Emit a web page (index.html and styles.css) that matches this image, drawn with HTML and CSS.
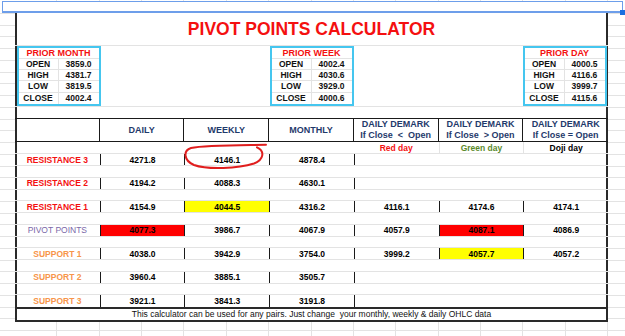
FILE: index.html
```html
<!DOCTYPE html>
<html>
<head>
<meta charset="utf-8">
<link rel="stylesheet" href="styles.css">
</head>
<body>
<div class="sheet">
  <div class="selbar"><span class="handle"></span></div>
  <div class="frame">
    <div class="title">PIVOT POINTS CALCULATOR</div>
    <div class="priors">
      <div class="prior">
        <div class="ph">PRIOR MONTH</div>
        <div class="k">OPEN</div><div class="v">3859.0</div>
        <div class="k">HIGH</div><div class="v">4381.7</div>
        <div class="k">LOW</div><div class="v">3819.5</div>
        <div class="k last">CLOSE</div><div class="v last">4002.4</div>
      </div>
      <div class="prior">
        <div class="ph">PRIOR WEEK</div>
        <div class="k">OPEN</div><div class="v">4002.4</div>
        <div class="k">HIGH</div><div class="v">4030.6</div>
        <div class="k">LOW</div><div class="v">3929.0</div>
        <div class="k last">CLOSE</div><div class="v last">4000.6</div>
      </div>
      <div class="prior">
        <div class="ph">PRIOR DAY</div>
        <div class="k">OPEN</div><div class="v">4000.5</div>
        <div class="k">HIGH</div><div class="v">4116.6</div>
        <div class="k">LOW</div><div class="v">3999.7</div>
        <div class="k last">CLOSE</div><div class="v last">4115.6</div>
      </div>
    </div>
    <div class="gap"></div>
    <div class="thead">
      <div></div>
      <div>DAILY</div>
      <div>WEEKLY</div>
      <div>MONTHLY</div>
      <div><span>DAILY DEMARK</span><span class="pre">If Close  &lt;  Open</span></div>
      <div><span>DAILY DEMARK</span><span class="pre">If Close  &gt; Open</span></div>
      <div><span>DAILY DEMARK</span><span>If Close = Open</span></div>
    </div>
    <div class="row sub">
      <div></div><div></div><div></div><div></div>
      <div class="red">Red day</div>
      <div class="green g">Green day</div>
      <div class="g">Doji day</div>
    </div>
    <div class="row">
      <div class="lbl res">RESISTANCE 3</div>
      <div class="b">4271.8</div><div class="b">4146.1</div><div class="b">4878.4</div>
      <div class="b"></div><div></div><div></div>
    </div>
    <div class="sp"></div>
    <div class="row">
      <div class="lbl res">RESISTANCE 2</div>
      <div class="b">4194.2</div><div class="b">4088.3</div><div class="b">4630.1</div>
      <div class="b"></div><div></div><div></div>
    </div>
    <div class="sp"></div>
    <div class="row">
      <div class="lbl res">RESISTANCE 1</div>
      <div class="b">4154.9</div><div class="b yel">4044.5</div><div class="b">4316.2</div>
      <div class="b">4116.1</div><div class="b">4174.6</div><div class="b">4174.1</div>
    </div>
    <div class="sp"></div>
    <div class="row">
      <div class="lbl pp">PIVOT POINTS</div>
      <div class="b redbg">4077.3</div><div class="b">3986.7</div><div class="b">4067.9</div>
      <div class="b">4057.9</div><div class="b redbg">4087.1</div><div class="b">4086.9</div>
    </div>
    <div class="sp"></div>
    <div class="row">
      <div class="lbl sup">SUPPORT 1</div>
      <div class="b">4038.0</div><div class="b">3942.9</div><div class="b">3754.0</div>
      <div class="b">3999.2</div><div class="b yel">4057.7</div><div class="b">4057.2</div>
    </div>
    <div class="sp"></div>
    <div class="row">
      <div class="lbl sup">SUPPORT 2</div>
      <div class="b">3960.4</div><div class="b">3885.1</div><div class="b">3505.7</div>
      <div class="b"></div><div></div><div></div>
    </div>
    <div class="sp"></div>
    <div class="row lastrow">
      <div class="lbl sup">SUPPORT 3</div>
      <div class="b">3921.1</div><div class="b">3841.3</div><div class="b">3191.8</div>
      <div class="b"></div><div></div><div></div>
    </div>
    <div class="footer">This calculator can be used for any pairs. Just change  your monthly, weekly &amp; daily OHLC data</div>
  </div>
  <svg class="circle" width="625" height="336" viewBox="0 0 625 336">
    <path d="M 266 143.8 C 245 144.2, 205 143.8, 191 147 C 183 149.5, 183.5 159.5, 194 164 C 208 169, 238 167.5, 254 162.5 C 264 158.5, 265 150, 257 146.3" fill="none" stroke="#e01e1e" stroke-width="2" stroke-linecap="round"/>
  </svg>
</div>
</body>
</html>
```
FILE: styles.css
```css
* { box-sizing: border-box; }
html, body { margin: 0; padding: 0; }
body {
  width: 625px;
  height: 336px;
  overflow: hidden;
  font-family: "Liberation Sans", Arial, sans-serif;
  color: #000;
  background-color: #fff;
  background-image:
    repeating-linear-gradient(to bottom, transparent 0 10.75px, #e3e3e3 10.75px 11.75px),
    repeating-linear-gradient(to right, transparent 0 41.36px, #e3e3e3 41.36px 42.36px);
  background-position: 0 2px, 15px 0;
}
.sheet { position: relative; height: 336px; }
.selbar {
  position: relative;
  margin: 1px 0 0 2px;
  width: 621px;
  height: 12px;
  border: 1px solid #6d9eea;
  border-bottom-width: 2px;
  background: #fff;
}
.handle {
  position: absolute;
  right: -3px;
  bottom: -4px;
  width: 5px;
  height: 5px;
  background: #1a6fe0;
}
.frame {
  margin-left: 15px;
  width: 593px;
  background: #fff;
  box-shadow: inset 2px 0 0 #2a2a2a, inset -2px 0 0 #2a2a2a;
  border-bottom: 2px solid #2a2a2a;
}
.title {
  height: 33px;
  border-bottom: 1px solid #e3e3e3;
  display: flex;
  align-items: center;
  justify-content: center;
  color: #f41010;
  font-weight: bold;
  font-size: 17.5px;
}
.priors {
  display: flex;
  justify-content: space-between;
  padding: 0 1.5px;
  height: 61px;
  border-bottom: 1px solid #e3e3e3;
}
.prior {
  width: 84px;
  height: 60px;
  border: 2px solid #45c6ef;
  background: #fff;
  display: grid;
  grid-template-columns: 1fr 1fr;
  grid-template-rows: 10.5px repeat(4, 1fr);
  font-size: 8.5px;
  font-weight: bold;
  color: #111;
}
.prior .ph {
  grid-column: 1 / 3;
  color: #f41010;
  font-size: 9px;
  line-height: 10px;
  text-align: center;
  border-bottom: 1px solid #e3e3e3;
}
.prior .k, .prior .v {
  display: flex;
  align-items: center;
  justify-content: center;
  border-bottom: 1px solid #e3e3e3;
}
.prior .k { border-right: 1px solid #e3e3e3; }
.prior .last { border-bottom: 0; }
.gap { height: 11px; }
.thead {
  display: grid;
  grid-template-columns: repeat(7, 1fr);
  height: 24px;
  border-top: 1px solid #1a1a1a;
  border-bottom: 1px solid #1a1a1a;
}
.thead > div {
  display: flex;
  flex-direction: column;
  align-items: center;
  justify-content: center;
  border-right: 1px solid #1a1a1a;
  color: #1f3a6b;
  font-weight: bold;
  font-size: 9px;
  line-height: 11.3px;
}
.thead > div:last-child { border-right: 0; }
.pre { white-space: pre; }
.row {
  display: grid;
  grid-template-columns: repeat(7, 1fr);
  height: 11.75px;
  border-bottom: 1px solid #e3e3e3;
}
.row > div {
  display: flex;
  align-items: center;
  justify-content: center;
  font-size: 8.5px;
  font-weight: bold;
  white-space: nowrap;
}
.row.sub { height: 12.25px; }
.row .g { border-left: 1px solid #e3e3e3; }
.row .b { border-left: 1px solid #1a1a1a; }
.red { color: #f41010; }
.green { color: #5a8a2c; }
.res { color: #f41010; }
.pp { color: #7a67a8; font-weight: normal !important; }
.sup { color: #f7954a; }
.yel { background: #ffff00; }
.redbg { background: #ff0000; }
.row.lastrow { border-bottom: 0; }
.sp {
  height: 11.75px;
  border-bottom: 1px solid #e3e3e3;
}
.footer {
  height: 12.5px;
  border-top: 2px solid #2a2a2a;
  text-align: center;
  font-size: 8.5px;
  line-height: 10.5px;
  white-space: pre;
  color: #111;
}
.circle {
  position: absolute;
  left: 0;
  top: 0;
  pointer-events: none;
}
```
